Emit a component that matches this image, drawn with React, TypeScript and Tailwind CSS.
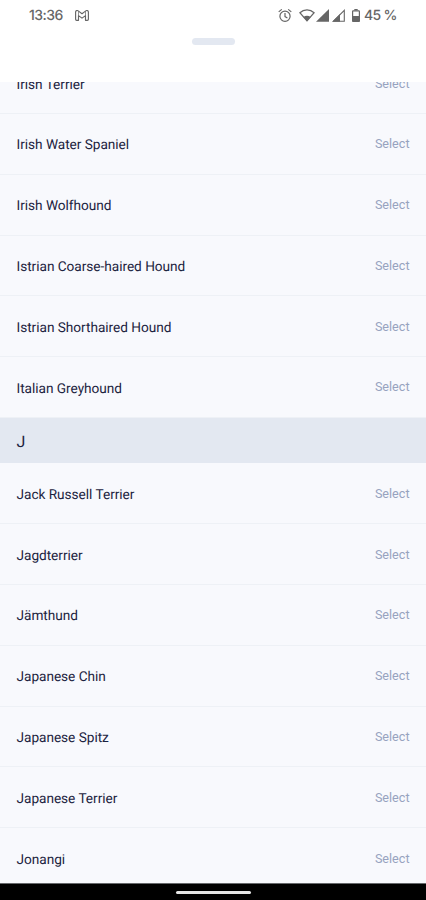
const breedsI = [
  "Irish Terrier",
  "Irish Water Spaniel",
  "Irish Wolfhound",
  "Istrian Coarse-haired Hound",
  "Istrian Shorthaired Hound",
  "Italian Greyhound",
];

const breedsJ = [
  "Jack Russell Terrier",
  "Jagdterrier",
  "Jämthund",
  "Japanese Chin",
  "Japanese Spitz",
  "Japanese Terrier",
  "Jonangi",
];

function GmailIcon() {
  return (
    <svg width="14" height="11" viewBox="0 0 14 11" fill="none" stroke="#666" strokeWidth="1.15" strokeLinejoin="round">
      <path d="M.6 2.1v7.2q0 1 1 1h1.9V5.6L7 8.1l3.5-2.5v4.7h1.9q1 0 1-1V2.1C13.4.5 11.8.2 10.8.9L7 3.7 3.2.9C2.2.2.6.5.6 2.1Z" />
      <path d="M3.5 1.2v4.4M10.5 1.2v4.4" strokeWidth=".7" />
    </svg>
  );
}

function AlarmIcon() {
  return (
    <svg width="14" height="14" viewBox="0 0 14 14" fill="none" stroke="#666" strokeWidth="1.2">
      <circle cx="7" cy="7.3" r="5.1" />
      <path d="M7 4.1v3.5L9.4 9M.7 2.9 3.8.4M13.3 2.9 10.2.4" />
    </svg>
  );
}

function WifiIcon() {
  return (
    <svg width="16" height="13" viewBox="0 0 16 13">
      <path d="M.9 3.7C4.9-.1 11.1-.1 15.1 3.7L8 11.8Z" fill="none" stroke="#666" strokeWidth="1.2" />
      <path d="M4.4 7.9C6.5 6.3 9.5 6.3 11.6 7.9L8 12.3Z" fill="#666" />
    </svg>
  );
}

function SignalIcon({ weak = false }: { weak?: boolean }) {
  return (
    <svg width="13" height="13" viewBox="0 0 13 13">
      {weak ? (
        <>
          <path d="M1.5 12.2 12.3 1.4v10.8Z" fill="none" stroke="#666" strokeWidth="1.1" />
          <path d="M.2 12.8 8 5v7.8Z" fill="#666" />
        </>
      ) : (
        <path d="M0 12.8 13 0v12.8Z" fill="#666" />
      )}
    </svg>
  );
}

function BatteryIcon() {
  return (
    <svg width="8" height="13" viewBox="0 0 8 13">
      <path d="M2.3 0h3.4v1.4H2.3Z" fill="#666" />
      <rect x=".6" y="1.9" width="6.8" height="10.5" rx=".5" fill="none" stroke="#666" strokeWidth="1.2" />
      <path d="M.5 7h7v5.5h-7Z" fill="#666" />
    </svg>
  );
}

function StatusBar() {
  return (
    <div className="flex h-[31px] items-center pl-[29px] pr-[28px] font-['Inter',sans-serif] font-medium text-[#666]">
      <span className="w-[46px] pt-[1.5px] text-[14px] leading-4 tracking-[-0.5px]">13:36</span>
      <GmailIcon />
      <div className="ml-auto flex items-center">
        <AlarmIcon />
        <div className="ml-[7px] flex items-center">
          <WifiIcon />
          <div className="ml-[1px] flex gap-[3px]">
            <SignalIcon />
            <SignalIcon weak />
          </div>
        </div>
        <div className="ml-[7px]">
          <BatteryIcon />
        </div>
        <span className="ml-[4px] w-[34px] whitespace-nowrap pt-[1.5px] text-[14px] leading-4 tracking-[-0.7px]">45 %</span>
      </div>
    </div>
  );
}

function BreedRow({ name }: { name: string }) {
  return (
    <li className="flex h-[60.8px] items-center justify-between border-b border-[#eef1f6] px-[16.5px]">
      <span className="pt-[3.2px] text-[13.65px] leading-5 tracking-[-0.03px] text-[#1c2340]">{name}</span>
      <button type="button" className="pt-[1px] text-[12.6px] leading-5 text-[#97a3bf]">
        Select
      </button>
    </li>
  );
}

export default function App() {
  return (
    <div className="flex h-[900px] w-[426px] flex-col overflow-hidden bg-white font-['Roboto',sans-serif] [text-rendering:geometricPrecision]">
      <header className="h-[82px] shrink-0">
        <StatusBar />
        <div className="mx-auto mt-[6.5px] h-[7.5px] w-[43px] rounded-full bg-[#e3e8f1]" />
      </header>

      <main className="min-h-0 flex-1 overflow-hidden bg-[#f8f9fd]">
        <ul className="-mt-[28.9px]">
          {breedsI.map((name) => (
            <BreedRow key={name} name={name} />
          ))}
        </ul>
        <h2 className="flex h-[45.5px] items-center bg-[#e3e8f1] px-[16.5px] pt-[3px] text-[16px] text-[#1c2340]">J</h2>
        <ul>
          {breedsJ.map((name) => (
            <BreedRow key={name} name={name} />
          ))}
        </ul>
      </main>

      <footer className="flex h-[17px] shrink-0 items-center justify-center border-t border-[#66686b] bg-black">
        <div className="mt-[1px] h-[2.5px] w-[75px] rounded-full bg-[#e6e6e6]" />
      </footer>
    </div>
  );
}
